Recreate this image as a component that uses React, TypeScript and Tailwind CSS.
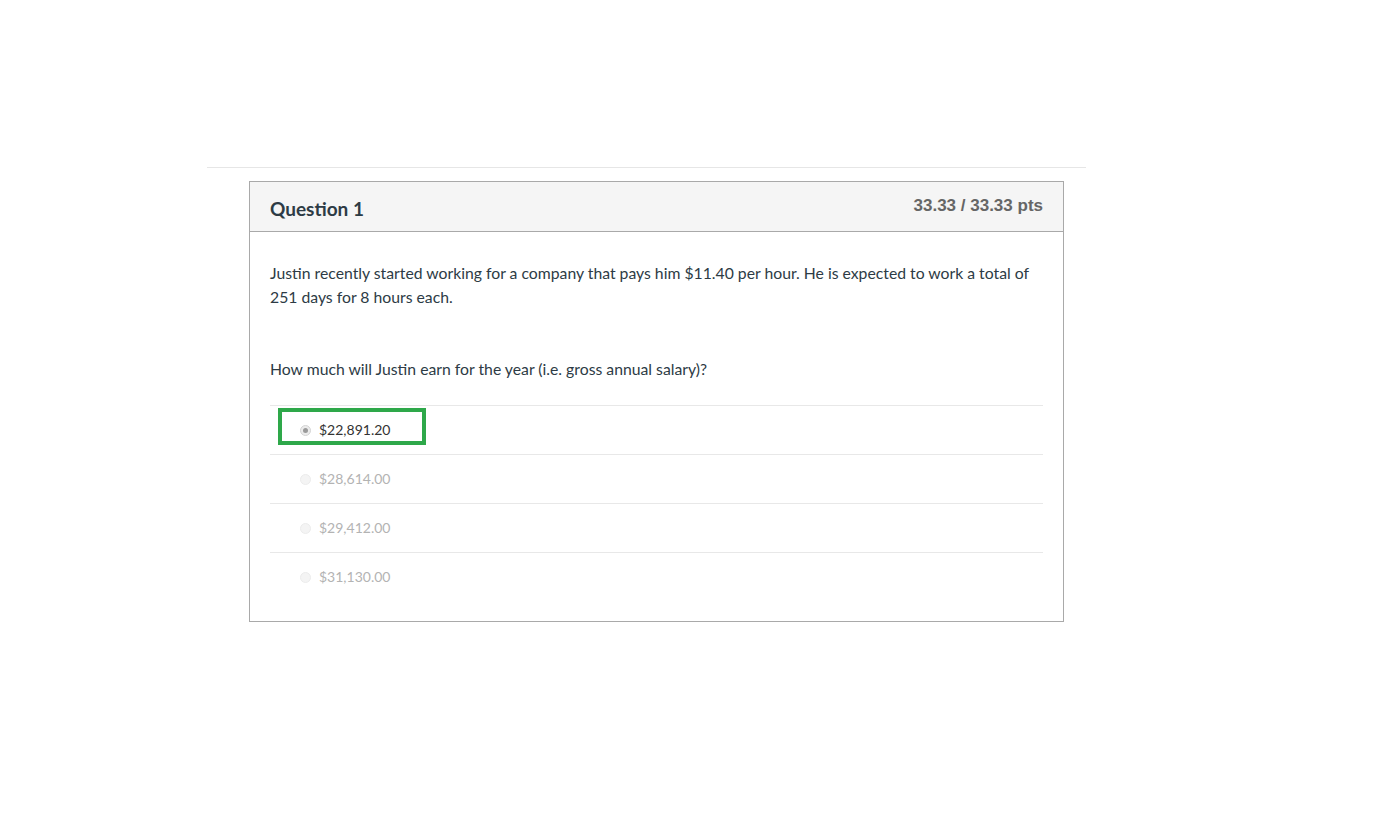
const answers = [
  { label: '$22,891.20', selected: true },
  { label: '$28,614.00', selected: false },
  { label: '$29,412.00', selected: false },
  { label: '$31,130.00', selected: false },
];

function Radio({ selected }: { selected: boolean }) {
  return selected ? (
    <span className="flex h-[11px] w-[11px] items-center justify-center rounded-full border border-[#d4d4d4] bg-[#ececec]">
      <span className="h-[5px] w-[5px] rounded-full bg-[#9a9a9a]" />
    </span>
  ) : (
    <span className="h-[11px] w-[11px] rounded-full border border-[#ececec] bg-[#f4f4f4]" />
  );
}

export default function App() {
  return (
    <div className="min-h-screen bg-white font-['Lato','Noto_Sans',sans-serif] text-[#2d3b45]">
      <div className="h-[167px]" />
      <div className="ml-[207px] w-[879px] border-t border-[#e6e6e6] pt-[13px]">
        <div className="ml-[42px] w-[815px] border border-[#a9a9a9]">
          {/* header */}
          <div className="flex h-[50px] items-start justify-between border-b border-[#a9a9a9] bg-[#f5f5f5] px-[20px]">
            <h2 className="pt-[15px] text-[19px] font-bold leading-[24px]">Question 1</h2>
            <div className="pt-[12px] font-['Liberation_Sans',sans-serif] text-[17px] font-bold leading-[24px] text-[#666]">
              33.33 / 33.33 pts
            </div>
          </div>

          {/* body */}
          <div className="px-[20px] pb-[20px] pt-[29px] text-[15.75px] leading-[24px]">
            <p className="mb-[12px]">
              Justin recently started working for a company that pays him $11.40 per hour. He is expected to work a total of 251 days for 8 hours each.
            </p>
            <p className="mb-[12px]">&nbsp;</p>
            <p className="mb-[24px]">How much will Justin earn for the year (i.e. gross annual salary)?</p>

            <div>
              {answers.map((a) => (
                <div
                  key={a.label}
                  className="relative flex h-[49px] items-center gap-[8px] border-t border-[#e8e8e8] pl-[30px]"
                >
                  <Radio selected={a.selected} />
                  <span className={'text-[14px] ' + (a.selected ? 'text-[#333]' : 'text-[#b3b3b3]')}>{a.label}</span>
                  {a.selected && (
                    <div className="absolute left-[8px] top-[2px] h-[37px] w-[148px] border-4 border-[#2ea84a]" />
                  )}
                </div>
              ))}
            </div>
          </div>
        </div>
      </div>
    </div>
  );
}
